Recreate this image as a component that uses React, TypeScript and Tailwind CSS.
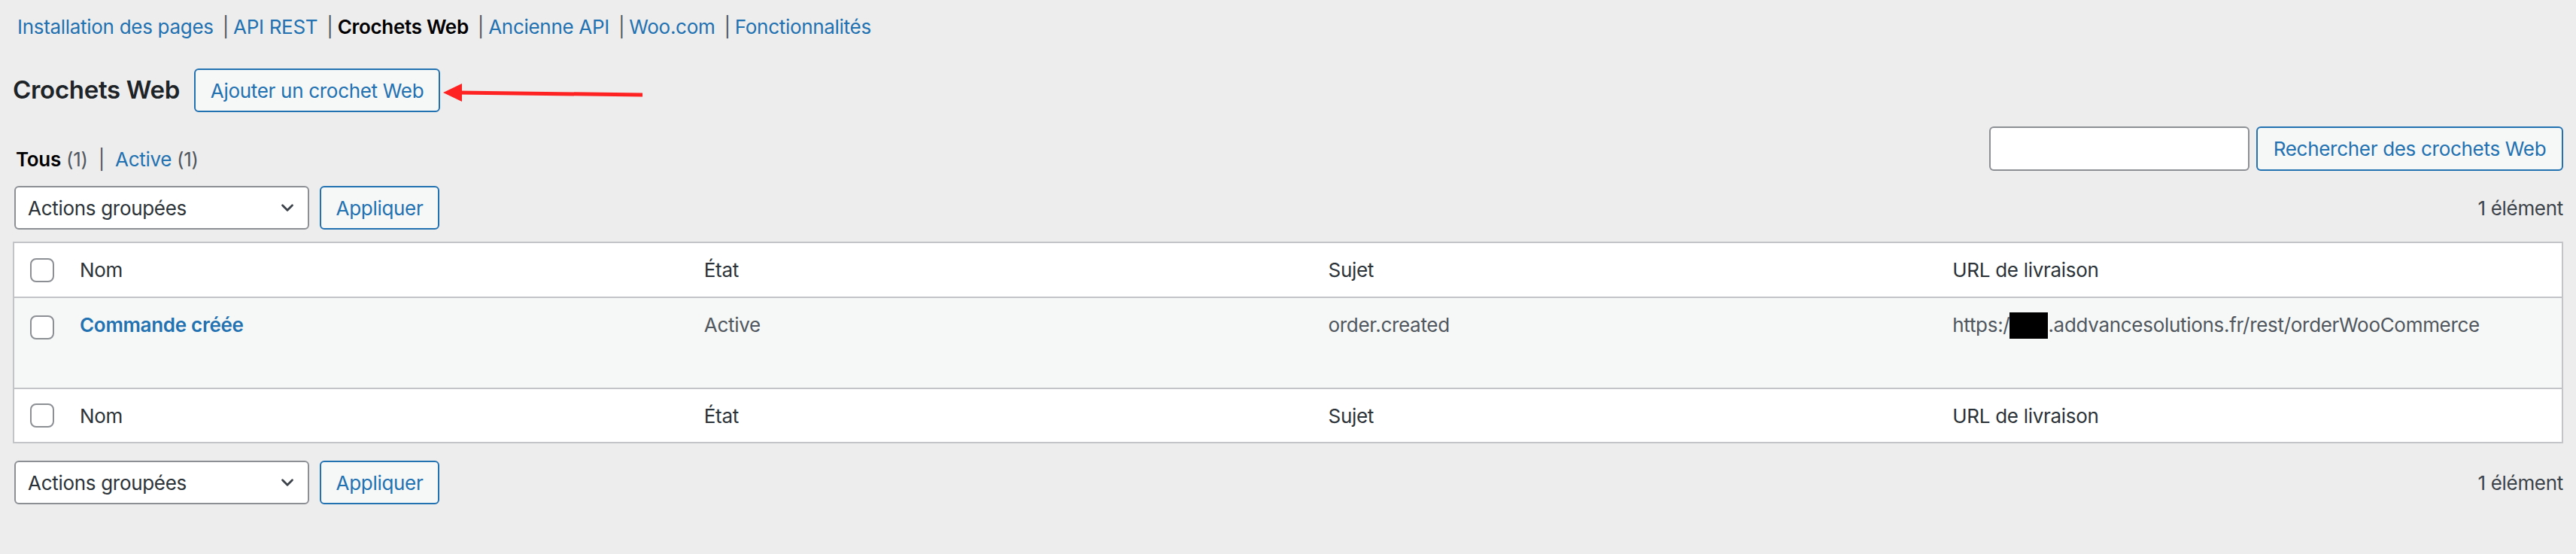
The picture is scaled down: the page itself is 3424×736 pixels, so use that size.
import { ChevronDown } from 'lucide-react';

const navLinks = [
  { label: 'Installation des pages' },
  { label: 'API REST' },
  { label: 'Crochets Web', current: true },
  { label: 'Ancienne API' },
  { label: 'Woo.com' },
  { label: 'Fonctionnalités' },
];

const columns = ['Nom', 'État', 'Sujet', 'URL de livraison'];

function Checkbox() {
  return (
    <span className="block h-[32px] w-[32px] rounded-[8px] border-2 border-[#8c8f94] bg-white" />
  );
}

function BulkActions() {
  return (
    <div className="flex h-[58px] items-center">
      <div className="ml-[2px] flex h-[58px] w-[392px] items-center justify-between rounded-[6px] border-2 border-[#8c8f94] bg-white pl-[16px] pr-[14px] text-[#2c3338]">
        <span>Actions groupées</span>
        <ChevronDown className="h-[26px] w-[26px] text-[#3c434a]" strokeWidth={2.6} />
      </div>
      <button className="ml-[14px] h-[58px] w-[159px] rounded-[6px] border-2 border-[#2271b1] bg-[#f6f7f7] text-[#2271b1]">
        Appliquer
      </button>
      <span className="ml-auto text-[#3c434a]">1 élément</span>
    </div>
  );
}

function HeaderRow({ top }: { top?: boolean }) {
  return (
    <div
      className={
        top
          ? 'grid h-[73px] grid-cols-[67px_1fr_1fr_1fr_1fr] items-center border-b-2 border-[#c3c4c7] bg-white text-[#2c3338]'
          : 'grid h-[72px] grid-cols-[67px_1fr_1fr_1fr_1fr] items-center border-t-2 border-[#c3c4c7] bg-white text-[#2c3338]'
      }
    >
      <div className="pl-[21px]">
        <Checkbox />
      </div>
      {columns.map(c => (
        <div key={c} className="px-[20px]">{c}</div>
      ))}
    </div>
  );
}

export default function App() {
  return (
    <div className="min-h-screen w-full bg-[#ededed] px-[17px] font-['Inter','Liberation_Sans',sans-serif] text-[26px] tracking-[-0.3px] text-[#3c434a]">
      {/* sub navigation */}
      <div className="flex items-center pl-[6px] pt-[18px] leading-[36px]">
        {navLinks.map((l, i) => (
          <span key={l.label} className="flex items-center">
            {l.current ? (
              <span className="font-semibold text-[#000]">{l.label}</span>
            ) : (
              <a className="text-[#2271b1]">{l.label}</a>
            )}
            {i < navLinks.length - 1 && (
              <span className="pl-[12px] pr-[6px] text-[#50575e]">|</span>
            )}
          </span>
        ))}
      </div>

      {/* title */}
      <div className="mt-[37px] flex h-[58px] items-center">
        <h2 className="text-[33px] font-semibold text-[#1d2327]">Crochets Web</h2>
        <button className="ml-[19px] h-[58px] w-[327px] rounded-[6px] border-2 border-[#2271b1] bg-[#f6f7f7] text-[#2271b1]">
          Ajouter un crochet Web
        </button>
        <svg width="270" height="30" viewBox="0 0 270 30" className="ml-[4px]">
          <polygon points="0,18 25,6 25,30" fill="#fe2222" />
          <polygon points="20,15.5 265,18.5 265,23.5 20,20.5" fill="#fe2222" />
        </svg>
      </div>

      {/* filters + search */}
      <div className="mt-[19px] flex h-[59px] items-start justify-between">
        <div className="mt-[26px] pl-[4px] leading-[36px]">
          <span className="font-semibold text-[#000]">Tous</span>{' '}
          <span className="text-[#50575e]">(1)</span>
          <span className="px-[14px] text-[#50575e]">|</span>
          <a className="text-[#2271b1]">Active</a>{' '}
          <span className="text-[#50575e]">(1)</span>
        </div>
        <div className="flex items-center gap-[9px]">
          <input className="h-[59px] w-[346px] rounded-[6px] border-2 border-[#8c8f94] bg-white" />
          <button className="h-[59px] w-[408px] rounded-[6px] border-2 border-[#2271b1] bg-[#f6f7f7] text-[#2271b1]">
            Rechercher des crochets Web
          </button>
        </div>
      </div>

      <div className="mt-[20px]">
        <BulkActions />
      </div>

      {/* webhooks table */}
      <div className="mt-[16px] border-2 border-[#c3c4c7]">
        <HeaderRow top />
        <div className="grid h-[119px] grid-cols-[67px_1fr_1fr_1fr_1fr] items-start bg-[#f6f7f7] pt-[18px] leading-[36px] text-[#50575e]">
          <div className="pl-[21px] pt-[5px]">
            <Checkbox />
          </div>
          <div className="px-[20px]">
            <a className="font-semibold text-[#2271b1]">Commande créée</a>
          </div>
          <div className="px-[20px]">Active</div>
          <div className="px-[20px]">order.created</div>
          <div className="flex items-center px-[20px]">
            <span>https:/</span>
            <span className="inline-block h-[35px] w-[51px] bg-black" />
            <span>.addvancesolutions.fr/rest/orderWooCommerce</span>
          </div>
        </div>
        <HeaderRow />
      </div>

      <div className="mt-[23px]">
        <BulkActions />
      </div>
    </div>
  );
}
